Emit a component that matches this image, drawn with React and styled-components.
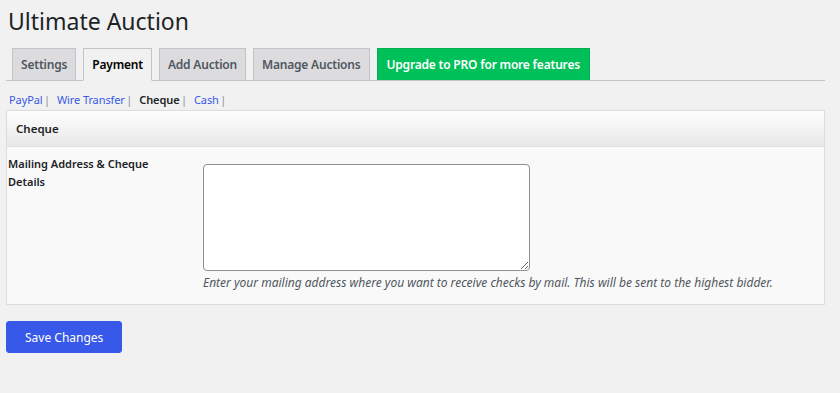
import styled, { createGlobalStyle } from "styled-components";

const GlobalStyle = createGlobalStyle`
  html, body {
    margin: 0;
    background: #f1f1f1;
    font-family: "Noto Sans", "Open Sans", sans-serif;
    color: #1d2327;
  }
`;

const Page = styled.div`
  padding: 0 15px 0 6px;
`;

const Title = styled.h1`
  margin: 0;
  padding: 7px 0 0 2px;
  font-size: 23px;
  font-weight: 400;
  line-height: 29px;
  color: #1d2327;
`;

const TabBar = styled.nav`
  display: flex;
  margin-top: 12px;
  padding-left: 6px;
  border-bottom: 1px solid #c3c4c7;
  column-gap: 7px;
  align-items: flex-end;
`;

const Tab = styled.a`
  display: block;
  box-sizing: border-box;
  height: ${(p) => (p.$active ? "33px" : "32px")};
  padding: 0 8px;
  margin-bottom: ${(p) => (p.$active ? "-1px" : "0")};
  border: 1px solid #c3c4c7;
  border-bottom: ${(p) => (p.$active ? "1px solid #f1f1f1" : "none")};
  background: ${(p) => (p.$active ? "#f1f1f1" : "#dcdcde")};
  color: ${(p) => (p.$active ? "#000" : "#50575e")};
  font-size: 12px;
  font-weight: 600;
  letter-spacing: -0.2px;
  line-height: 31px;
  text-decoration: none;
  white-space: nowrap;
`;

const ProTab = styled(Tab)`
  padding: 0 9px;
  background: #00c05a;
  border-color: #00b050;
  color: #fff;
`;

const SubNav = styled.ul`
  display: flex;
  margin: 10px 0 0;
  padding: 0 0 0 3px;
  list-style: none;
  font-size: 11px;
  letter-spacing: -0.1px;
  line-height: 18px;
  li {
    color: #8a8fa8;
    margin-right: 7px;
  }
`;

const SubLink = styled.a`
  color: ${(p) => (p.$current ? "#1d2327" : "#3858e9")};
  font-weight: ${(p) => (p.$current ? 600 : 400)};
  text-decoration: none;
  margin-right: 1.5px;
`;

const Panel = styled.section`
  margin-top: 1px;
  border: 1px solid #dcdcde;
  background: #f9f9f9;
`;

const PanelHead = styled.h3`
  margin: 0;
  height: 35px;
  padding: 0 9px;
  font-size: 11.5px;
  font-weight: 600;
  line-height: 35px;
  color: #1d2327;
  background: linear-gradient(#fefefe, #e8e8e8);
  border-bottom: 1px solid #e2e2e2;
`;

const FieldRow = styled.div`
  display: grid;
  grid-template-columns: 195px 1fr;
  padding: 8px 0 12px 1px;
`;

const Label = styled.label`
  font-size: 11px;
  font-weight: 600;
  line-height: 18px;
  color: #1d2327;
  width: 160px;
`;

const Field = styled.div`
  padding-top: 9px;
`;

const TextArea = styled.textarea`
  display: block;
  box-sizing: border-box;
  width: 327px;
  height: 107px;
  border: 1px solid #8c8f94;
  border-radius: 4px;
  background: #fff;
  margin: 0;
`;

const Hint = styled.p`
  margin: 3px 0 0;
  font-size: 12px;
  font-style: italic;
  line-height: 18px;
  color: #50575e;
`;

const SaveButton = styled.button`
  margin-top: 16px;
  height: 32px;
  padding: 0 18px;
  border: 1px solid #3858e9;
  border-radius: 3px;
  background: #3858e9;
  color: #fff;
  font-family: inherit;
  font-size: 12px;
  cursor: pointer;
`;

function App() {
  return (
    <Page>
      <GlobalStyle />
      <Title>Ultimate Auction</Title>
      <TabBar>
        <Tab href="#">Settings</Tab>
        <Tab href="#" $active>
          Payment
        </Tab>
        <Tab href="#">Add Auction</Tab>
        <Tab href="#">Manage Auctions</Tab>
        <ProTab href="#">Upgrade to PRO for more features</ProTab>
      </TabBar>

      <SubNav>
        <li>
          <SubLink href="#">PayPal</SubLink>|
        </li>
        <li>
          <SubLink href="#">Wire Transfer</SubLink>|
        </li>
        <li>
          <SubLink href="#" $current>
            Cheque
          </SubLink>
          |
        </li>
        <li>
          <SubLink href="#">Cash</SubLink>|
        </li>
      </SubNav>

      <Panel>
        <PanelHead>Cheque</PanelHead>
        <FieldRow>
          <Label htmlFor="cheque">Mailing Address &amp; Cheque Details</Label>
          <Field>
            <TextArea id="cheque" />
            <Hint>
              Enter your mailing address where you want to receive checks by
              mail. This will be sent to the highest bidder.
            </Hint>
          </Field>
        </FieldRow>
      </Panel>

      <SaveButton>Save Changes</SaveButton>
    </Page>
  );
}

export default App;
